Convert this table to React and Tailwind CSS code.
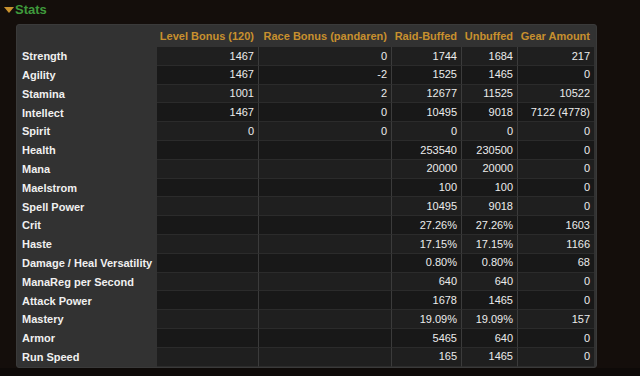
import React from 'react';

const cols = ['Level Bonus (120)', 'Race Bonus (pandaren)', 'Raid-Buffed', 'Unbuffed', 'Gear Amount'];
const widths = ['w-[101px]', 'w-[133px]', 'w-[70px]', 'w-[56px]', 'w-[77px]'];

const rows = [
  ['Strength', '1467', '0', '1744', '1684', '217'],
  ['Agility', '1467', '-2', '1525', '1465', '0'],
  ['Stamina', '1001', '2', '12677', '11525', '10522'],
  ['Intellect', '1467', '0', '10495', '9018', '7122 (4778)'],
  ['Spirit', '0', '0', '0', '0', '0'],
  ['Health', '', '', '253540', '230500', '0'],
  ['Mana', '', '', '20000', '20000', '0'],
  ['Maelstrom', '', '', '100', '100', '0'],
  ['Spell Power', '', '', '10495', '9018', '0'],
  ['Crit', '', '', '27.26%', '27.26%', '1603'],
  ['Haste', '', '', '17.15%', '17.15%', '1166'],
  ['Damage / Heal Versatility', '', '', '0.80%', '0.80%', '68'],
  ['ManaReg per Second', '', '', '640', '640', '0'],
  ['Attack Power', '', '', '1678', '1465', '0'],
  ['Mastery', '', '', '19.09%', '19.09%', '157'],
  ['Armor', '', '', '5465', '640', '0'],
  ['Run Speed', '', '', '165', '1465', '0'],
];

export default function App() {
  return (
    <div className="w-[640px] h-[376px] overflow-hidden bg-[#140e0b] relative" style={{ fontFamily: '"Liberation Sans", Arial, sans-serif' }}>
      {/* Title */}
      <div className="flex items-center h-[18px] pl-[4px] pt-[1px]">
        <svg width="10" height="7" viewBox="0 0 10 7" className="mr-[1px] mt-[1px]">
          <path d="M0 0 L10 0 L5 6 Z" fill="#c9922f" />
        </svg>
        <span className="text-[13px] font-bold text-[#3f9a3c] leading-none">Stats</span>
      </div>

      {/* Panel */}
      <div className="ml-[16px] mt-[6px] w-[581px] h-[344px] bg-[#323232] border border-[#3a3a3a] rounded-[3px] pl-[5px] pr-[2px] overflow-hidden">
        {/* Header */}
        <div className="flex h-[22px] items-end pb-[3px]">
          <div className="w-[135px]" />
          {cols.map((c, i) => (
            <div key={c} className={`${widths[i]} text-right pr-[4px] text-[11px] font-bold text-[#c8902e] whitespace-nowrap`}>
              {c}
            </div>
          ))}
        </div>

        {/* Rows */}
        {rows.map((r, ri) => (
          <div key={r[0]} className="flex h-[18.8px]">
            <div className="w-[135px] flex items-center text-[11px] font-bold text-[#f0f0f0] whitespace-nowrap">
              {r[0]}
            </div>
            {r.slice(1).map((v, ci) => (
              <div
                key={ci}
                className={`${widths[ci]} flex items-center justify-end pr-[4px] text-[11px] text-[#ececec] border-b border-[#2b2b2b] ${ci > 0 ? 'border-l border-l-[#3b3b3b]' : ''} ${ri % 2 === 0 ? 'bg-[#1f1f1f]' : 'bg-[#181818]'}`}
              >
                {v}
              </div>
            ))}
          </div>
        ))}
      </div>

      <div className="h-[8px] bg-[#0e0a08]" />
    </div>
  );
}
